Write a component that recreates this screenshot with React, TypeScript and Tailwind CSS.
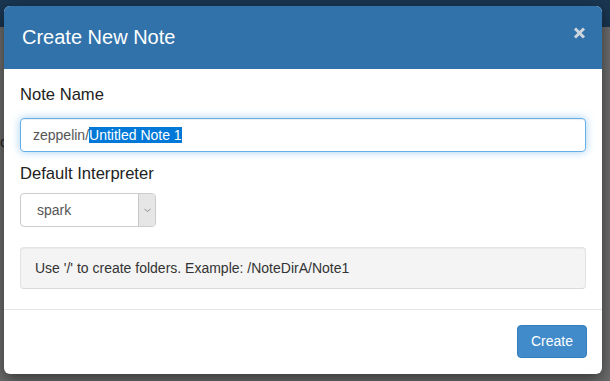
import React from 'react';

const App: React.FC = () => {
  return (
    <div
      className="relative w-[610px] h-[381px] overflow-hidden bg-[#6c6c6c]"
      style={{ fontFamily: '"Liberation Sans", Arial, sans-serif' }}
    >
      <div className="h-[27px] bg-[#1a3651]"></div>
      <div className="pt-[105px] pl-0 text-[14px] leading-[20px] text-[#1e1e1e]">c</div>

      <div className="absolute left-[4px] top-[6px] w-[598px] h-[368px] bg-white rounded-[6px] shadow-[0_5px_15px_rgba(0,0,0,0.5)] flex flex-col">
        <div className="relative h-[63px] shrink-0 bg-[#3172aa] rounded-t-[6px] px-[18px] flex items-center">
          <h4 className="text-[20px] leading-[23px] text-white font-normal">Create New Note</h4>
          <button className="absolute right-[16px] top-[21px] w-[13px] h-[12px] flex items-center justify-center">
            <svg width="13" height="12" viewBox="0 0 13 12">
              <path d="M2 1.5 L11 10.5 M11 1.5 L2 10.5" stroke="#cfd5dd" strokeWidth="3" strokeLinecap="butt" />
            </svg>
          </button>
        </div>

        <div className="px-[16px] pt-[16px] pb-[20px] flex flex-col">
          <label className="text-[16.6px] leading-[20px] text-[#222]">Note Name</label>
          <div className="mt-[13px] h-[34px] border border-[#66afe9] rounded-[4px] shadow-[inset_0_1px_1px_rgba(0,0,0,0.075),0_0_8px_rgba(102,175,233,0.6)] flex items-center pl-[12px] text-[14px] text-[#555]">
            <span>zeppelin/</span>
            <span className="bg-[#0078d7] text-white leading-[16px]">Untitled Note 1</span>
          </div>

          <label className="mt-[12px] text-[16.6px] leading-[20px] text-[#222]">Default Interpreter</label>
          <div className="mt-[9px] w-[136px] h-[34px] border border-[#ccc] rounded-[4px] flex text-[14px] text-[#555] overflow-hidden">
            <div className="flex-1 flex items-center pl-[16px]">spark</div>
            <div className="w-[17px] bg-[#e6e6e6] border-l border-[#c8c8c8] flex items-center justify-center">
              <svg width="7" height="5" viewBox="0 0 7 5">
                <path d="M0.5 0.8 L3.5 3.8 L6.5 0.8" fill="none" stroke="#8a8a8a" strokeWidth="1" />
              </svg>
            </div>
          </div>

          <div className="mt-[20px] h-[42px] bg-[#f4f4f4] border border-[#e3e3e3] border-b-[#d9d9d9] rounded-[4px] shadow-[inset_0_1px_1px_rgba(0,0,0,0.05)] flex items-center pl-[14px] text-[14px] text-[#333]">
            Use '/' to create folders. Example: /NoteDirA/Note1
          </div>
        </div>

        <div className="border-t border-[#e5e5e5] pt-[15px] px-[15px] flex justify-end">
          <button className="h-[33px] px-[13px] bg-[#428bca] border border-[#357ebd] rounded-[4px] text-white text-[14px]">
            Create
          </button>
        </div>
      </div>
    </div>
  );
};

export default App;
